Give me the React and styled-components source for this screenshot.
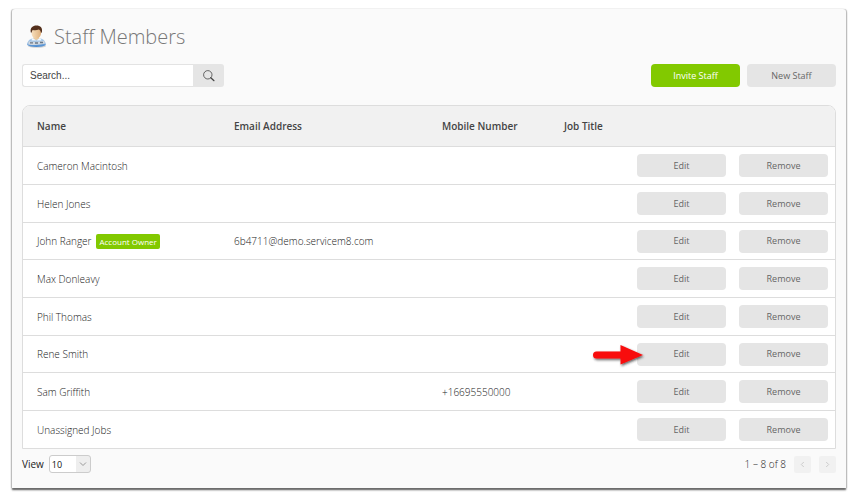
import { useState } from "react"
import styled, { createGlobalStyle } from "styled-components"

const GlobalStyle = createGlobalStyle`
* {
    box-sizing: border-box;
}
body {
    margin: 0;
    background: #fff;
    font-family: "Open Sans", "Noto Sans", sans-serif;
    font-size: 10px;
    line-height: 14px;
    color: #444;
}
button, input, select {
    font-family: inherit;
    font-size: inherit;
}
`
const Panel = styled.main`
margin: 9px 9px 9px 12px;
padding: 11px 10px 15px;
background: #fafafa;
border-radius: 3px 3px 0 0;
box-shadow: -1px 0 1px #bbb, 1px 0 1px #bbb, 0 2px 2px #555;
`
const Header = styled.header`
display: flex;
align-items: center;
gap: 7px;
height: 32px;
padding-left: 4px;
`
const Heading = styled.h1`
margin: 0;
padding-top: 2px;
font-size: 20px;
line-height: 30px;
font-weight: 300;
color: #777;
`
const Toolbar = styled.div`
display: flex;
justify-content: space-between;
align-items: center;
padding: 12px 0 18px;
`
const SearchForm = styled.form`
display: flex;
width: 202px;
height: 23px;
`
const SearchInput = styled.input`
flex: 1;
min-width: 0;
padding: 0 7px;
border: 1px solid #e3e3e3;
border-right: none;
border-radius: 3px 0 0 3px;
background: #fff;
font-family: "Liberation Sans", Arial, sans-serif;
outline: none;
&::placeholder {
    color: #444;
    opacity: 1;
}
`
const SearchButton = styled.button`
display: flex;
align-items: center;
justify-content: center;
width: 31px;
padding: 0;
border: none;
border-radius: 0 3px 3px 0;
background: #e5e5e5;
cursor: pointer;
`
const Actions = styled.div`
display: flex;
gap: 7px;
`
const Button = styled.button`
display: block;
width: 89px;
height: 23px;
padding: 0;
border: none;
border-radius: 4px;
background: ${props => props.$primary ? "#82c900" : "#e5e5e5"};
color: ${props => props.$primary ? "#fff" : "#666"};
font-weight: ${props => props.$primary ? 500 : 400};
font-size: 9px;
line-height: 14px;
cursor: pointer;
`
const Table = styled.table`
width: 100%;
table-layout: fixed;
border: 1px solid #ddd;
border-radius: 8px 8px 0 0;
border-spacing: 0;
background: #fff;
overflow: hidden;
`
const Col = styled.col`
width: ${props => props.$width};
`
const HeadCell = styled.th`
height: 41px;
padding: 0 0 0 14px;
border-bottom: 1px solid #ddd;
background: #f1f1f1;
text-align: left;
font-weight: 600;
color: #444;
`
const Row = styled.tr`
height: 38px;
&:nth-child(3n), &:last-child {
    height: 37px;
}
&:not(:last-child) td {
    border-bottom: 1px solid #ddd;
}
`
const Cell = styled.td`
padding: 0 0 0 14px;
font-weight: 300;
color: #222;
white-space: nowrap;
`
const ButtonCell = styled.td`
position: relative;
padding: 0 6px 0 7px;
`
const Badge = styled.span`
display: inline-block;
margin-left: 5px;
padding: 0 3px;
border-radius: 2px;
background: #82c900;
color: #fff;
font-size: 8px;
line-height: 15px;
font-weight: 500;
`
const Arrow = styled.svg`
position: absolute;
left: -38px;
top: 7px;
pointer-events: none;
`
const Footer = styled.footer`
display: flex;
justify-content: space-between;
align-items: center;
padding-top: 6px;
color: #222;
`
const ViewLabel = styled.label`
display: flex;
align-items: center;
gap: 5px;
`
const SelectWrap = styled.span`
display: flex;
align-items: center;
position: relative;
`
const Select = styled.select`
appearance: none;
width: 42px;
height: 18px;
padding: 0 2px;
border: 1px solid #ccc;
border-radius: 3px;
background: linear-gradient(to right, #fff 26px, #eee 26px);
color: #111;
font-size: 9px;
`
const SelectArrow = styled.svg`
position: absolute;
right: 4px;
pointer-events: none;
`
const Pager = styled.nav`
display: flex;
align-items: center;
gap: 8px;
font-weight: 300;
`
const PageButton = styled.button`
display: flex;
align-items: center;
justify-content: center;
width: 17px;
height: 17px;
padding: 0;
border: none;
border-radius: 2px;
background: #f1f1f1;
`

const staff = [
    { name: "Cameron Macintosh" },
    { name: "Helen Jones" },
    { name: "John Ranger", owner: true, email: "6b4711@demo.servicem8.com" },
    { name: "Max Donleavy" },
    { name: "Phil Thomas" },
    { name: "Rene Smith", marked: true },
    { name: "Sam Griffith", mobile: "+16695550000" },
    { name: "Unassigned Jobs" }
]

function StaffIcon() {
    return (
        <svg width="21" height="24" viewBox="0 0 21 24" aria-hidden="true">
            <defs>
                <linearGradient id="shirt" x1="0" y1="0" x2="0" y2="1">
                    <stop offset="0" stopColor="#c3dcf3" />
                    <stop offset="1" stopColor="#4788cf" />
                </linearGradient>
                <linearGradient id="face" x1="0" y1="0" x2="1" y2="0">
                    <stop offset="0" stopColor="#f7dfbd" />
                    <stop offset="1" stopColor="#dfb07c" />
                </linearGradient>
            </defs>
            <ellipse cx="11" cy="22" rx="9" ry="1.800" fill="#aaa" opacity="0.5" />
            <path d="M1.200 21C1.500 16.500 4 14.500 8 14h5c4 .5 6.500 2.500 6.800 7-3 2.500-15.600 2.500-18.600 0z" fill="url(#shirt)" />
            <path d="M7.500 12h5.500v2.500l-2.700 1.800-2.800-1.800z" fill="#eccb9e" />
            <path d="M6.500 14l3.800 2.500 3.700-2.500 1.500 2.500h-10z" fill="#f4f8fc" />
            <ellipse cx="10.300" cy="9" rx="4.800" ry="5.500" fill="url(#face)" />
            <path d="M4.800 8.500C3.800 3.500 7 1.500 10.300 1.500c4.200 0 6.700 2.200 5.500 7.200l-1-.2c-.2-1.600-.8-2.200-2-2.900-2 .8-4.500.7-6 .4-.8.800-1 1.600-1 2.500z" fill="#54301c" />
            <path d="M2.500 17.300c5 .8 11 .6 16-.5l.4 3c-5.200 1.300-11.300 1.400-16.700.6z" fill="#d0d7df" />
            <path d="M4 18.900h3M9 19h3M14 18.500h3" stroke="#6c7885" strokeWidth="1.300" />
        </svg>
    )
}

function SearchIcon() {
    return (
        <svg width="12" height="12" viewBox="0 0 12 12" fill="none" stroke="#444" aria-hidden="true">
            <circle cx="4.800" cy="4.800" r="4.200" strokeWidth="0.800" />
            <path d="M7.800 7.700l3.200 3" strokeWidth="1.200" strokeLinecap="round" />
        </svg>
    )
}

function PointerArrow() {
    return (
        <Arrow width="56" height="26" viewBox="0 0 56 26" aria-hidden="true">
            <defs>
                <filter id="arrowShadow" x="-20%" y="-20%" width="140%" height="160%">
                    <feDropShadow dx="1" dy="1.500" stdDeviation="1" floodColor="#222" floodOpacity="0.7" />
                </filter>
            </defs>
            <path
                d="M4.500 8.500h24v-6.500L51 12 28.500 21.500v-6h-24a3.500 3.500 0 0 1 0-7z"
                fill="#f80d0d"
                filter="url(#arrowShadow)"
            />
        </Arrow>
    )
}

function StaffRow({ person }) {
    return (
        <Row>
            <Cell>
                {person.name}
                {person.owner && <Badge>Account Owner</Badge>}
            </Cell>
            <Cell>{person.email}</Cell>
            <Cell>{person.mobile}</Cell>
            <Cell></Cell>
            <ButtonCell>
                <Button type="button">Edit</Button>
                {person.marked && <PointerArrow />}
            </ButtonCell>
            <ButtonCell>
                <Button type="button">Remove</Button>
            </ButtonCell>
        </Row>
    )
}

function App() {
    const [search, setSearch] = useState("")
    const [view, setView] = useState("10")

    return (
        <>
        <GlobalStyle />
        <Panel>
            <Header>
                <StaffIcon />
                <Heading>Staff Members</Heading>
            </Header>
            <Toolbar>
                <SearchForm role="search" onSubmit={e => e.preventDefault()}>
                    <SearchInput type="text" aria-label="Search staff" placeholder="Search..." value={search} onChange={e => setSearch(e.target.value)} />
                    <SearchButton type="submit" aria-label="Search"><SearchIcon /></SearchButton>
                </SearchForm>
                <Actions>
                    <Button type="button" $primary>Invite Staff</Button>
                    <Button type="button">New Staff</Button>
                </Actions>
            </Toolbar>
            <Table>
                <colgroup>
                    <Col $width="197px" />
                    <Col $width="auto" />
                    <Col $width="122px" />
                    <Col $width="80px" />
                    <Col $width="102px" />
                    <Col $width="103px" />
                </colgroup>
                <thead>
                    <tr>
                        <HeadCell scope="col">Name</HeadCell>
                        <HeadCell scope="col">Email Address</HeadCell>
                        <HeadCell scope="col">Mobile Number</HeadCell>
                        <HeadCell scope="col">Job Title</HeadCell>
                        <HeadCell colSpan={2}></HeadCell>
                    </tr>
                </thead>
                <tbody>
                    {staff.map(person => <StaffRow key={person.name} person={person} />)}
                </tbody>
            </Table>
            <Footer>
                <ViewLabel>
                    View
                    <SelectWrap>
                        <Select value={view} onChange={e => setView(e.target.value)}>
                            <option>10</option>
                            <option>25</option>
                            <option>50</option>
                        </Select>
                        <SelectArrow width="8" height="6" viewBox="0 0 8 6" fill="none" stroke="#999" aria-hidden="true">
                            <path d="M1 1.500l3 3 3-3" />
                        </SelectArrow>
                    </SelectWrap>
                </ViewLabel>
                <Pager aria-label="Pages">
                    <span>1 – 8 of 8</span>
                    <PageButton type="button" disabled aria-label="Previous page">
                        <svg width="5" height="7" viewBox="0 0 5 7" fill="none" stroke="#ccc"><path d="M3.800 1L1.300 3.500l2.500 2.500" /></svg>
                    </PageButton>
                    <PageButton type="button" disabled aria-label="Next page">
                        <svg width="5" height="7" viewBox="0 0 5 7" fill="none" stroke="#ccc"><path d="M1.200 1l2.500 2.500L1.200 6" /></svg>
                    </PageButton>
                </Pager>
            </Footer>
        </Panel>
        </>
    )
}

export default App
